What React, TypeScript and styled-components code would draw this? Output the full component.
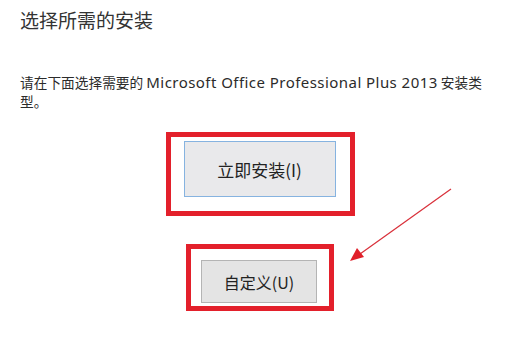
import React from "react";
import styled, { createGlobalStyle } from "styled-components";

const Global = createGlobalStyle`
  html, body { margin: 0; padding: 0; background: #ffffff; }
  body { width: 506px; height: 346px; overflow: hidden; }
`;

const Page = styled.div`
  position: relative;
  width: 506px;
  height: 346px;
  box-sizing: border-box;
  padding: 8px 6px 0 20px;
  font-family: "Noto Sans CJK SC", sans-serif;
  color: #2b2b2b;
`;

const Title = styled.h1`
  margin: 0;
  font-family: "Noto Sans CJK SC", sans-serif;
  font-weight: 400;
  font-size: 19px;
  line-height: 24px;
  color: #333;
`;

const Description = styled.p`
  margin: 41px 0 0 0;
  font-size: 13.7px;
  line-height: 19px;
  color: #2b2b2b;
  white-space: nowrap;
`;

const Latin = styled.span`
  font-family: "Noto Sans", sans-serif;
  font-size: 15px;
  line-height: 19px;
  letter-spacing: 0.45px;
`;

const Actions = styled.div`
  display: flex;
  flex-direction: column;
  align-items: center;
  width: 480px;
  margin-top: 21px;
`;

const Highlight = styled.div<{ $pad: string; $mt?: number }>`
  display: flex;
  justify-content: center;
  align-items: flex-start;
  border: 5px solid #e3202b;
  padding: ${(p) => p.$pad};
  margin-top: ${(p) => p.$mt ?? 0}px;
`;

const Button = styled.button<{ $w: number; $h: number; $primary?: boolean }>`
  width: ${(p) => p.$w}px;
  height: ${(p) => p.$h}px;
  box-sizing: border-box;
  border: 1px solid ${(p) => (p.$primary ? "#86b3e0" : "#b4b4b4")};
  background: ${(p) => (p.$primary ? "#e9e9eb" : "#e4e4e4")};
  font-family: "Noto Sans CJK SC", sans-serif;
  font-size: ${(p) => (p.$primary ? 17 : 16)}px;
  color: #222;
  padding: 0;
  cursor: default;
`;

const Arrow = styled.svg`
  position: absolute;
  left: 0;
  top: 0;
  pointer-events: none;
`;

export default function App() {
  return (
    <>
      <Global />
      <Page>
        <Title>选择所需的安装</Title>
        <Description>
          请在下面选择需要的 <Latin>Microsoft Office Professional Plus 2013</Latin> 安装类
          <br />
          型。
        </Description>
        <Actions>
          <Highlight $pad="4px 14px 14px 13px">
            <Button $w={152} $h={56} $primary>
              立即安装(I)
            </Button>
          </Highlight>
          <Highlight $pad="11px 12px 3px 10px" $mt={28}>
            <Button $w={116} $h={43}>自定义(U)</Button>
          </Highlight>
        </Actions>
        <Arrow width="506" height="346" viewBox="0 0 506 346">
          <line x1="451" y1="189" x2="360" y2="254" stroke="#d9303a" strokeWidth="1.2" />
          <polygon points="350,261 357,248 364,257" fill="#e0202a" />
        </Arrow>
      </Page>
    </>
  );
}
